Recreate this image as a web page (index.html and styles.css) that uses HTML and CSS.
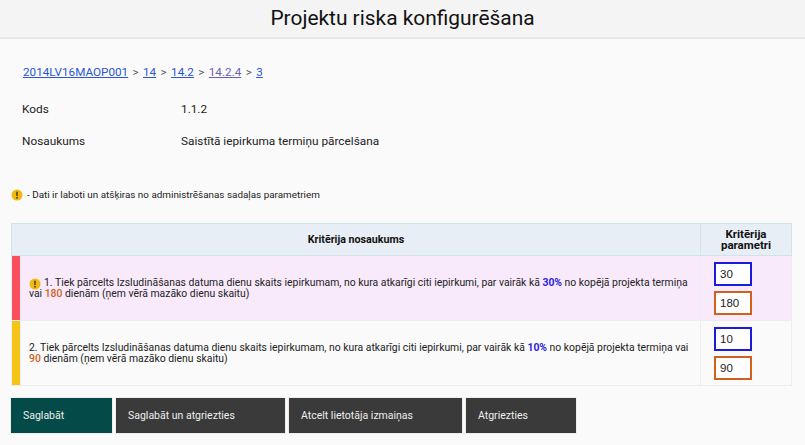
FILE: index.html
```html
<!DOCTYPE html>
<html lang="lv">
<head>
<meta charset="utf-8">
<title>Projektu riska konfigurēšana</title>
<link rel="stylesheet" href="styles.css">
</head>
<body>
<header class="page-header"><h1 class="page-title">Projektu riska konfigurēšana</h1></header>
<main class="content">
  <nav class="crumbs">
    <a href="#a">2014LV16MAOP001</a><span class="sep">&gt;</span><a href="#b">14</a><span class="sep">&gt;</span><a href="#c">14.2</a><span class="sep">&gt;</span><a class="visited" href="#d">14.2.4</a><span class="sep">&gt;</span><a href="#e">3</a>
  </nav>
  <dl class="facts">
    <div class="fact"><dt>Kods</dt><dd>1.1.2</dd></div>
    <div class="fact"><dt>Nosaukums</dt><dd>Saistītā iepirkuma termiņu pārcelšana</dd></div>
  </dl>
  <p class="legend"><svg class="warn" viewBox="0 0 12 12" aria-hidden="true"><circle cx="6" cy="6" r="5.5" fill="#f2b90f"/><rect x="5.2" y="2.4" width="1.6" height="4.6" rx=".6" fill="#5a4300"/><circle cx="6" cy="8.8" r=".95" fill="#5a4300"/></svg><span>- Dati ir laboti un atšķiras no administrēšanas sadaļas parametriem</span></p>
  <table class="criteria">
    <colgroup><col class="col-bar"><col><col class="col-param"></colgroup>
    <thead>
      <tr><th colspan="2">Kritērija nosaukums</th><th class="param-head">Kritērija parametri</th></tr>
    </thead>
    <tbody>
      <tr class="changed">
        <td class="bar bar-red"></td>
        <td class="desc"><svg class="warn warn-inline" viewBox="0 0 12 12" aria-hidden="true"><circle cx="6" cy="6" r="5.5" fill="#f2b90f"/><rect x="5.2" y="2.4" width="1.6" height="4.6" rx=".6" fill="#5a4300"/><circle cx="6" cy="8.8" r=".95" fill="#5a4300"/></svg>1. Tiek pārcelts Izsludināšanas datuma dienu skaits iepirkumam, no kura atkarīgi citi iepirkumi, par vairāk kā <b class="pct">30%</b> no kopējā projekta termiņa vai <b class="days">180</b> dienām (ņem vērā mazāko dienu skaitu)</td>
        <td class="params"><input class="num num-blue" value="30"><input class="num num-orange" value="180"></td>
      </tr>
      <tr>
        <td class="bar bar-yellow"></td>
        <td class="desc">2. Tiek pārcelts Izsludināšanas datuma dienu skaits iepirkumam, no kura atkarīgi citi iepirkumi, par vairāk kā <b class="pct">10%</b> no kopējā projekta termiņa vai <b class="days">90</b> dienām (ņem vērā mazāko dienu skaitu)</td>
        <td class="params"><input class="num num-blue" value="10"><input class="num num-orange" value="90"></td>
      </tr>
    </tbody>
  </table>
  <div class="actions">
    <button class="btn btn-primary">Saglabāt</button>
    <button class="btn btn-wide">Saglabāt un atgriezties</button>
    <button class="btn btn-wider">Atcelt lietotāja izmaiņas</button>
    <button class="btn btn-back">Atgriezties</button>
  </div>
</main>
</body>
</html>
```
FILE: styles.css
```css
* { box-sizing: border-box; }
html, body { margin: 0; height: 445px; overflow: hidden; }
body { background: #fafafa; color: #222; font-family: Roboto, "Noto Sans", sans-serif; font-size: 11.8px; }
.page-header { height: 39px; background: #f4f4f4; border-bottom: 2px solid #e9e9e9; text-align: center; }
.page-title { margin: 0; font-size: 20.9px; font-weight: 400; line-height: 37px; color: #111; }
.content { padding: 0 13px 0 11px; }
.crumbs { margin: 25px 0 0 12px; line-height: 16px; font-size: 11.7px; height: 16px; }
.crumbs a { color: #2a56d6; }
.crumbs a.visited { color: #6a5fb0; }
.sep { margin: 0 4.4px; color: #555; }
.facts { margin: 21px 0 0 11px; }
.fact { display: flex; height: 32px; }
.fact dt { width: 159px; line-height: 16px; }
.fact dd { margin: 0; line-height: 16px; }
.legend { display: flex; align-items: center; gap: 4px; margin: 22px 0 0 0; font-size: 9.9px; line-height: 16px; height: 16px; }
.warn { width: 12px; height: 12px; flex: none; }
.warn-inline { vertical-align: -2px; margin: -2px 3px -2px 0; }
.criteria { width: 781px; margin-top: 20px; border-collapse: collapse; table-layout: fixed; font-size: 10.4px; }
.col-bar { width: 9px; }
.col-param { width: 91px; }
.criteria th { background: #e8eef6; border: 1px solid #cfe3e8; font-size: 10.7px; line-height: 11px; color: #111; font-weight: 700; height: 32px; padding: 0 4px; }
.criteria .param-head { font-size: 11.5px; }
.criteria td { border: 1px solid #eaeef0; }
.bar { padding: 0; }
.bar-red { background: #fa4f5e; }
.bar-yellow { background: #f4c518; }
.desc { padding: 0 8px; line-height: 11px; height: 65px; color: #222; }
.changed .desc, .changed .params { background: #f9eafb; }
.pct { color: #2a1ee0; }
.days { color: #d2601c; font-weight: 500; }
.params { padding: 0 13px; }
.num { display: block; width: 38px; height: 24px; padding: 0 4px; border: 2px solid #1b1bdc; background: #fff; font: 11.5px "Liberation Sans", sans-serif; color: #222; border-radius: 0; outline: none; }
.num + .num { margin-top: 5px; }
.num-orange { border-color: #d2601c; }
.actions { display: flex; gap: 2px; margin: 11px 0 0 -1px; }
.btn { height: 37px; padding: 0 12px; border: 1px solid #eee; background: #3a3a3a; color: #eee; font: 10.5px Roboto, sans-serif; text-align: left; }
.btn-primary { width: 103px; background: #044a48; }
.btn-wide { width: 171px; }
.btn-wider { width: 175px; }
.btn-back { width: 112px; }
```
